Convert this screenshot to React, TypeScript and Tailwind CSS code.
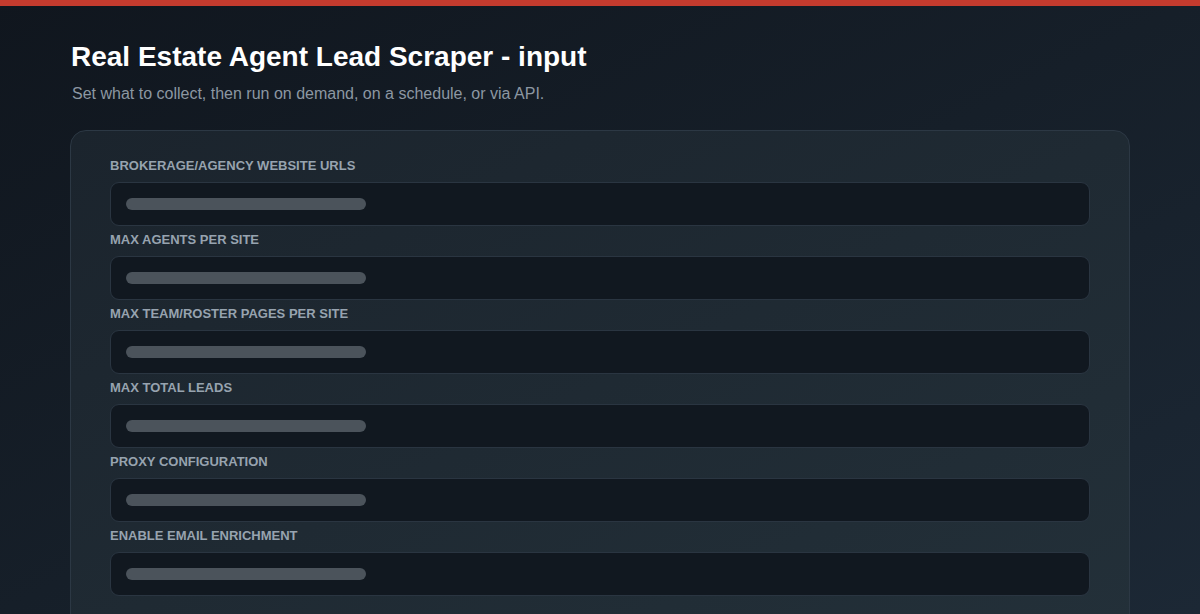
const fields = [
  "Brokerage/Agency Website URLs",
  "Max Agents per Site",
  "Max Team/Roster Pages per Site",
  "Max Total Leads",
  "Proxy Configuration",
  "Enable Email Enrichment",
];

function Field({ label }: { label: string }) {
  return (
    <div className="flex flex-col">
      <div className="h-4 text-[13px] leading-4 font-bold uppercase text-[#97a3af] mb-2">
        {label}
      </div>
      <div className="h-11 rounded-[9px] bg-[#111820] border border-[#2a3541] flex items-center px-[15px]">
        <div className="h-3 w-[240px] rounded-full bg-[#4b535b]" />
      </div>
    </div>
  );
}

export default function App() {
  return (
    <div
      className="h-[614px] overflow-hidden bg-gradient-to-br from-[#10161e] via-[#161f29] to-[#1c2835]"
      style={{ fontFamily: '"Liberation Sans", Arial, sans-serif' }}
    >
      <div className="h-1.5 bg-[#c43b2e]" />
      <div className="px-[70px]">
        <h1 className="mt-[35px] text-[28px] leading-8 font-bold text-white pl-px">
          Real Estate Agent Lead Scraper - input
        </h1>
        <p className="mt-[11px] text-[16px] leading-5 text-[#8c97a2] pl-[2px]">
          Set what to collect, then run on demand, on a schedule, or via API.
        </p>
        <div className="mt-[26px] rounded-2xl border border-[#2c3844] bg-gradient-to-br from-[#1b242d] to-[#233039] px-[39px] pt-[27px] pb-10 flex flex-col gap-1.5">
          {fields.map((f) => (
            <Field key={f} label={f} />
          ))}
        </div>
      </div>
    </div>
  );
}
